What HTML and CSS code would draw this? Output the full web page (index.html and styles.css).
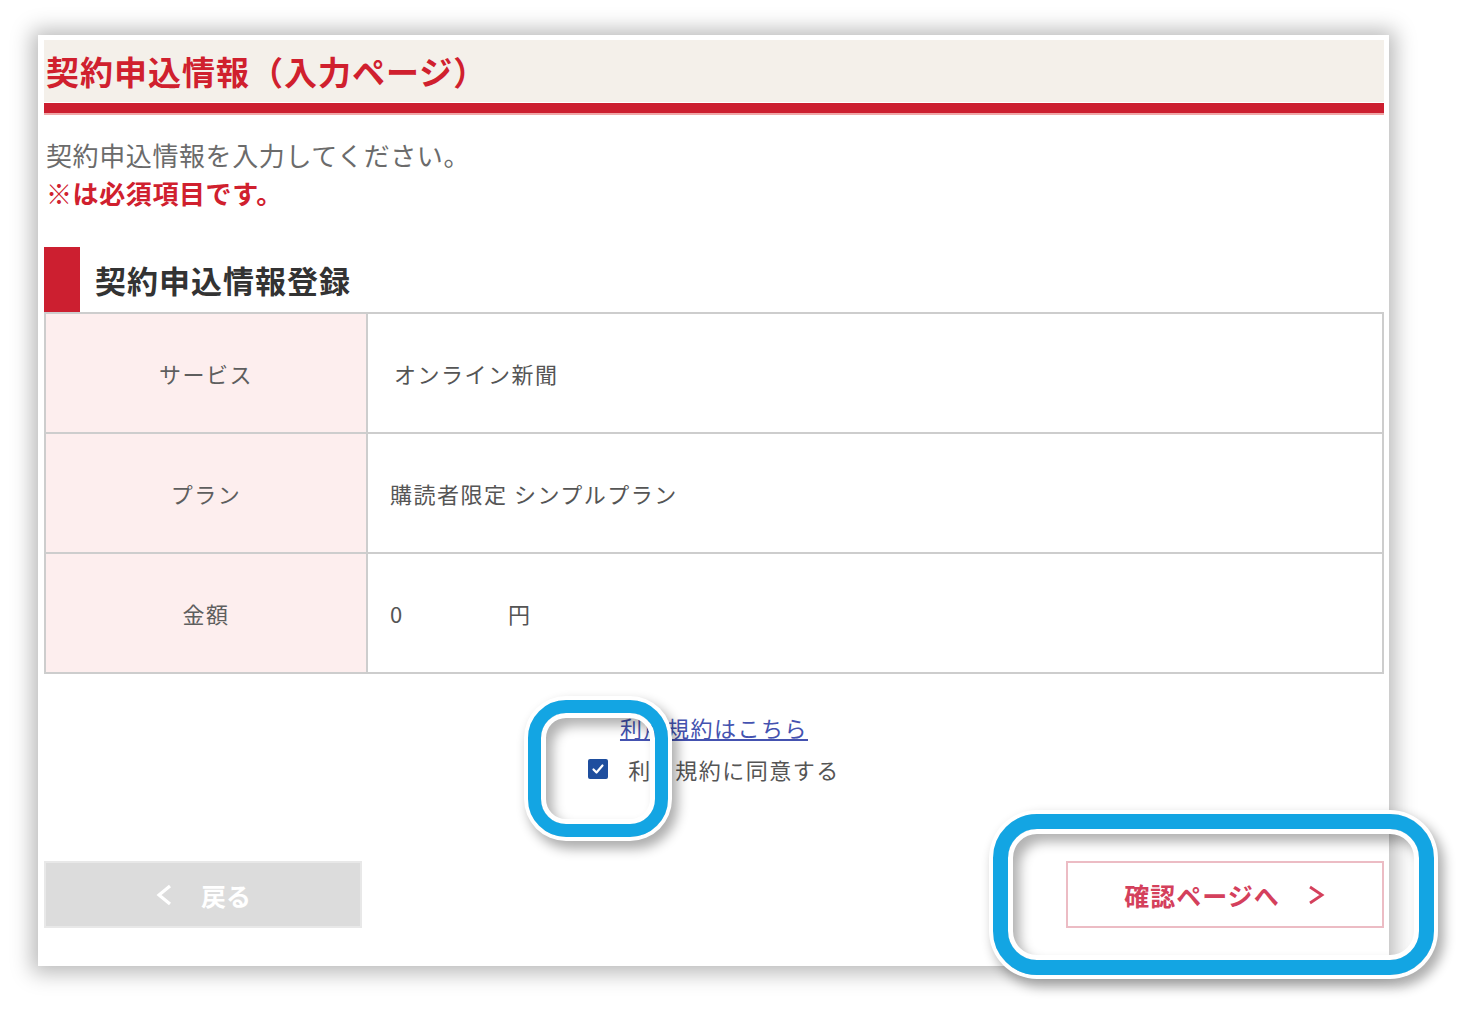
FILE: index.html
```html
<!DOCTYPE html>
<html lang="ja">
<head>
<meta charset="utf-8">
<title>契約申込情報（入力ページ）</title>
<link rel="stylesheet" href="styles.css">
</head>
<body>
<div class="stage">
  <div class="panel">
    <div class="head"><h1>契約申込情報（入力ページ）</h1></div>
    <div class="redbar"></div>
    <p class="lead">契約申込情報を入力してください。<br><span class="req">※は必須項目です。</span></p>
    <h2 class="section-title">契約申込情報登録</h2>
    <div class="table">
      <div class="label">サービス</div>
      <div class="value svc">オンライン新聞</div>
      <div class="label">プラン</div>
      <div class="value">購読者限定 シンプルプラン</div>
      <div class="label">金額</div>
      <div class="value"><span class="amount">0</span><span>円</span></div>
    </div>
    <div class="agree">
      <a class="terms" href="#">利用規約はこちら</a>
      <label class="check-row">
        <span class="checkbox"><svg viewBox="0 0 20 20" width="20" height="20"><path d="M5.5 10.5 L8.5 13.5 L14.5 6.5" fill="none" stroke="#fff" stroke-width="2.2" stroke-linecap="round" stroke-linejoin="round"/></svg></span>
        <span>利用規約に同意する</span>
      </label>
    </div>
    <div class="buttons">
      <button class="btn back"><svg class="chev" viewBox="0 0 18 24" width="18" height="24"><path d="M15 3 L4 12 L15 21" fill="none" stroke="#fff" stroke-width="3.2" stroke-linejoin="miter"/></svg><span>戻る</span></button>
      <button class="btn next"><span>確認ページへ</span><svg class="chev" viewBox="0 0 20 24" width="20" height="24"><path d="M4 4 L16 12 L4 20" fill="none" stroke="#d4405c" stroke-width="2.8" stroke-linejoin="miter"/></svg></button>
    </div>
  </div>
  <div class="hl hl-check"></div>
  <div class="hl hl-next"></div>
</div>
</body>
</html>
```
FILE: styles.css
```css
html, body {
  margin: 0;
  background: #fff;
  font-family: "Noto Sans CJK JP", "Noto Sans", sans-serif;
}
.stage {
  position: relative;
  width: 1460px;
  height: 1010px;
  padding: 35px 0 0 38px;
  box-sizing: border-box;
  overflow: hidden;
}
.panel {
  width: 1351px;
  height: 931px;
  background: #fff;
  box-shadow: 0 1px 20px 6px rgba(0, 0, 0, 0.28);
  padding: 5px 5px 0 6px;
  box-sizing: border-box;
}
.head {
  height: 62px;
  background: #f4f0ea;
  display: flex;
  align-items: center;
  padding-left: 2px;
}
.head h1 {
  margin: 0;
  font-size: 33px;
  line-height: 1;
  font-weight: 700;
  letter-spacing: 1px;
  color: #d0202e;
}
.redbar {
  margin-top: 1px;
  height: 10px;
  background: #cc1f30;
  border-bottom: 2px solid #f0a8a8;
}
.lead {
  margin: 21px 0 0 2px;
  font-size: 26px;
  line-height: 38px;
  letter-spacing: 0.6px;
  color: #6b6b6b;
}
.req {
  color: #d0202e;
  font-weight: 700;
}
.section-title {
  margin: 35px 0 0 0;
  height: 65px;
  border-left: 36px solid #cc1f30;
  padding-left: 15px;
  display: flex;
  align-items: center;
  font-size: 31px;
  font-weight: 700;
  letter-spacing: 1px;
  color: #333;
  box-sizing: border-box;
}
.table {
  display: grid;
  grid-template-columns: 320px 1fr;
  grid-auto-rows: 118px;
  gap: 2px;
  padding: 2px;
  background: #cdcdcd;
}
.label {
  background: #fdeeee;
  display: flex;
  align-items: center;
  justify-content: center;
  font-size: 22px;
  letter-spacing: 1.5px;
  color: #5e5e5e;
}
.value {
  background: #fff;
  display: flex;
  align-items: center;
  padding-left: 22px;
  font-size: 22px;
  letter-spacing: 1.5px;
  color: #555;
}
.svc {
  padding-left: 26px;
}
.amount {
  display: inline-block;
  width: 118px;
}
.agree {
  margin-top: 33px;
  display: flex;
  flex-direction: column;
  align-items: center;
}
.terms {
  display: block;
  line-height: 40px;
  font-size: 22px;
  letter-spacing: 1.5px;
  color: #4452b0;
  text-decoration: underline;
}
.check-row {
  display: flex;
  align-items: center;
  gap: 20px;
  height: 40px;
  margin-top: 2px;
  font-size: 22px;
  letter-spacing: 1.5px;
  color: #555;
}
.checkbox {
  width: 20px;
  height: 20px;
  background: #1e4e9e;
  border-radius: 2px;
  display: block;
}
.checkbox svg {
  display: block;
}
.buttons {
  margin-top: 72px;
  display: flex;
  justify-content: space-between;
}
.btn {
  width: 318px;
  height: 67px;
  box-sizing: border-box;
  display: flex;
  align-items: center;
  justify-content: center;
  font-family: "Noto Sans CJK JP", "Noto Sans", sans-serif;
  font-size: 25px;
  font-weight: 700;
  padding: 0;
  cursor: pointer;
}
.chev {
  display: block;
}
.back {
  background: #dcdcdc;
  border: 2px solid #e8e8e8;
  color: #fff;
  gap: 28px;
}
.next {
  background: #fff;
  border: 2px solid #ecbcc4;
  color: #d4405c;
  letter-spacing: 1px;
  gap: 26px;
}
.hl {
  position: absolute;
  box-sizing: border-box;
  border: 13px solid #13a5e3;
  box-shadow: 0 0 0 4px #fff, 5px 7px 12px 5px rgba(0, 0, 0, 0.32), inset 0 0 0 5px #fff, inset 7px 8px 12px 5px rgba(0, 0, 0, 0.3);
}
.hl-check {
  left: 528px;
  top: 700px;
  width: 140px;
  height: 137px;
  border-radius: 38px;
}
.hl-next {
  left: 993px;
  top: 814px;
  width: 441px;
  height: 161px;
  border-width: 15px;
  border-radius: 44px;
}
```
